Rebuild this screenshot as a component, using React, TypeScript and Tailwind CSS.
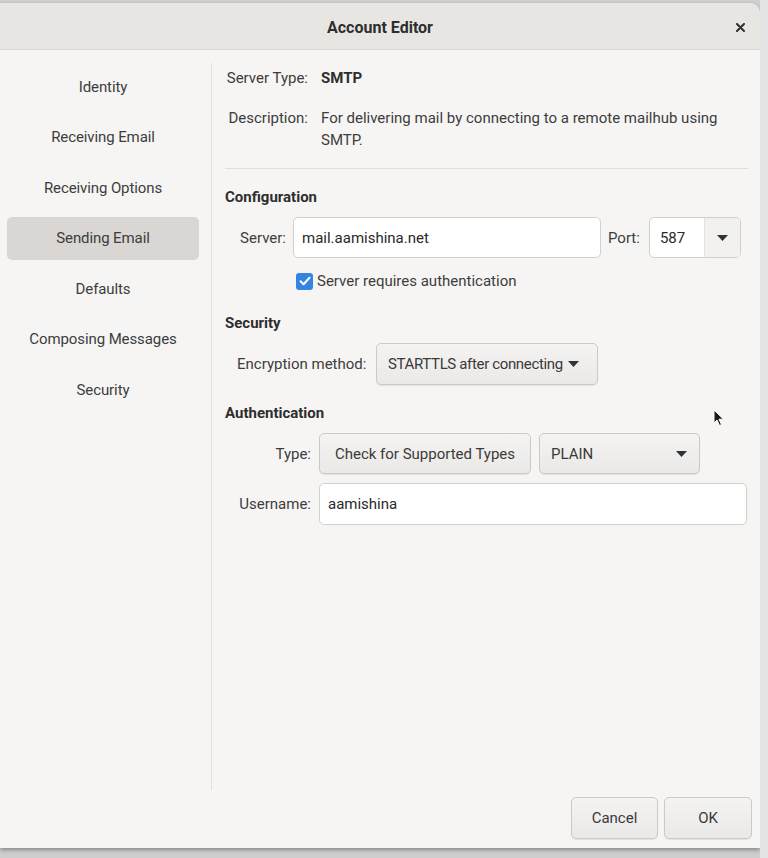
import React from "react";

const Caret = () => (
  <svg width="11" height="6" viewBox="0 0 11 6" className="shrink-0">
    <path d="M0 0 H11 L5.5 6 Z" fill="#2e3436" />
  </svg>
);

const Btn = ({ className = "", children }: { className?: string; children: React.ReactNode }) => (
  <div
    className={
      "flex items-center rounded-[5px] border border-[#cdc9c5] bg-gradient-to-b from-[#f4f3f1] to-[#ebe9e7] shadow-[0_1px_1px_rgba(0,0,0,0.08)] text-[#3a3a3a] whitespace-nowrap " +
      className
    }
  >
    {children}
  </div>
);

const Input = ({ className = "", children }: { className?: string; children: React.ReactNode }) => (
  <div
    className={
      "flex items-center rounded-[5px] border border-[#d3cfcb] bg-white pl-[8px] text-[#2a2a2a] " + className
    }
  >
    {children}
  </div>
);

export default function App() {
  const items = [
    "Identity",
    "Receiving Email",
    "Receiving Options",
    "Sending Email",
    "Defaults",
    "Composing Messages",
    "Security",
  ];
  return (
    <div
      className="relative w-[768px] h-[858px] overflow-hidden bg-[#cfcfcf] text-[15px] leading-[22px]"
      style={{ fontFamily: "Roboto, 'Noto Sans', sans-serif" }}
    >
      <div className="absolute right-0 top-0 h-full w-[8px] bg-[#e4e4e4]" />
      <div className="flex flex-col mt-[3px] w-[760px] h-[845px] bg-[#f6f5f4] rounded-tr-[10px] shadow-[0_2px_4px_rgba(0,0,0,0.35)]">
        {/* Title bar */}
        <div className="relative flex h-[47px] shrink-0 items-center justify-center rounded-tr-[10px] border-b border-[#d8d4d0] bg-[#e8e6e3] pt-[3px]">
          <span className="font-bold text-[16px] text-[#2e2e2e]">Account Editor</span>
          <svg className="absolute right-[15px] top-[20px]" width="9" height="9" viewBox="0 0 9 9">
            <path d="M1 1 L8 8 M8 1 L1 8" stroke="#2e2e2e" strokeWidth="2" strokeLinecap="round" />
          </svg>
        </div>
        {/* Body */}
        <div className="flex flex-1">
          {/* Sidebar */}
          <div className="flex w-[211px] shrink-0 flex-col gap-[7.5px] pl-[7px] pr-[12px] pt-[15px]">
            {items.map((t) => (
              <div
                key={t}
                className={
                  "flex h-[43px] items-center justify-center rounded-[5px] text-[#3d3d3d] tracking-[-0.1px] " +
                  (t === "Sending Email" ? "bg-[#d9d6d3]" : "")
                }
              >
                {t}
              </div>
            ))}
          </div>
          <div className="mt-[13px] w-px bg-[#e3e0dd]" />
          {/* Content */}
          <div className="flex flex-1 flex-col pl-[13px] pr-[12px] pt-[17px] text-[#3d3d3d]">
            <div className="flex">
              <div className="w-[83px] text-right">Server Type:</div>
              <div className="ml-[13px] font-bold text-[#2e2e2e]">SMTP</div>
            </div>
            <div className="mt-[18px] flex">
              <div className="w-[83px] text-right">Description:</div>
              <div className="ml-[13px] w-[410px]">
                For delivering mail by connecting to a remote mailhub using SMTP.
              </div>
            </div>
            <div className="mt-[17px] h-px bg-[#e0ddda]" />
            <div className="mt-[17px] font-bold text-[#2e2e2e]">Configuration</div>
            <div className="mt-[9px] flex items-center pl-[12px]">
              <div className="w-[49px] text-right">Server:</div>
              <Input className="ml-[7px] h-[41px] w-[308px]">mail.aamishina.net</Input>
              <div className="ml-[7px]">Port:</div>
              <div className="ml-[9px] flex h-[41px] w-[92px] overflow-hidden rounded-[5px] border border-[#d3cfcb] bg-white">
                <div className="flex flex-1 items-center pl-[10px] text-[#2a2a2a]">587</div>
                <div className="flex w-[36px] items-center justify-center border-l border-[#e3e0dd] bg-[#f2f1ef]">
                  <Caret />
                </div>
              </div>
            </div>
            <div className="mt-[12px] flex items-center pl-[71px]">
              <div className="flex h-[17px] w-[17px] items-center justify-center rounded-[3px] bg-[#3584e4]">
                <svg width="12" height="10" viewBox="0 0 12 10">
                  <path d="M1.5 5.2 L4.6 8.2 L10.5 1.8" stroke="white" strokeWidth="2" fill="none" strokeLinecap="round" strokeLinejoin="round" />
                </svg>
              </div>
              <span className="ml-[4px]">Server requires authentication</span>
            </div>
            <div className="mt-[20px] font-bold text-[#2e2e2e]">Security</div>
            <div className="mt-[9px] flex items-center pl-[12px]">
              <div className="w-[131px] whitespace-nowrap">Encryption method:</div>
              <Btn className="ml-[8px] h-[42px] w-[222px] gap-[5px] pl-[11px] pr-[8px] tracking-[-0.35px]">
                <span>STARTTLS after connecting</span>
                <Caret />
              </Btn>
            </div>
            <div className="mt-[17px] font-bold text-[#2e2e2e]">Authentication</div>
            <div className="mt-[9px] flex items-center pl-[12px]">
              <div className="w-[74px] text-right">Type:</div>
              <Btn className="ml-[8px] h-[41px] w-[212px] justify-center">Check for Supported Types</Btn>
              <Btn className="ml-[8px] h-[41px] w-[161px] justify-between pl-[11px] pr-[12px]">
                <span>PLAIN</span>
                <Caret />
              </Btn>
            </div>
            <div className="mt-[9px] flex items-center pl-[12px]">
              <div className="w-[74px] text-right">Username:</div>
              <Input className="ml-[8px] h-[42px] w-[428px]">aamishina</Input>
            </div>
          </div>
        </div>
        {/* Footer */}
        <div className="flex h-[58px] shrink-0 items-start justify-end gap-[6px] pr-[8px] pt-[7px]">
          <Btn className="h-[42px] w-[87px] justify-center">Cancel</Btn>
          <Btn className="h-[42px] w-[88px] justify-center">OK</Btn>
        </div>
      </div>
      {/* Mouse pointer */}
      <svg className="absolute left-[713px] top-[409px]" width="12" height="18" viewBox="0 0 12 18">
        <path d="M1 1 L1 14 L4 11 L6.5 16.5 L8.5 15.6 L6 10.2 L10.5 10.2 Z" fill="#1a1a1a" stroke="white" strokeWidth="1" />
      </svg>
    </div>
  );
}
